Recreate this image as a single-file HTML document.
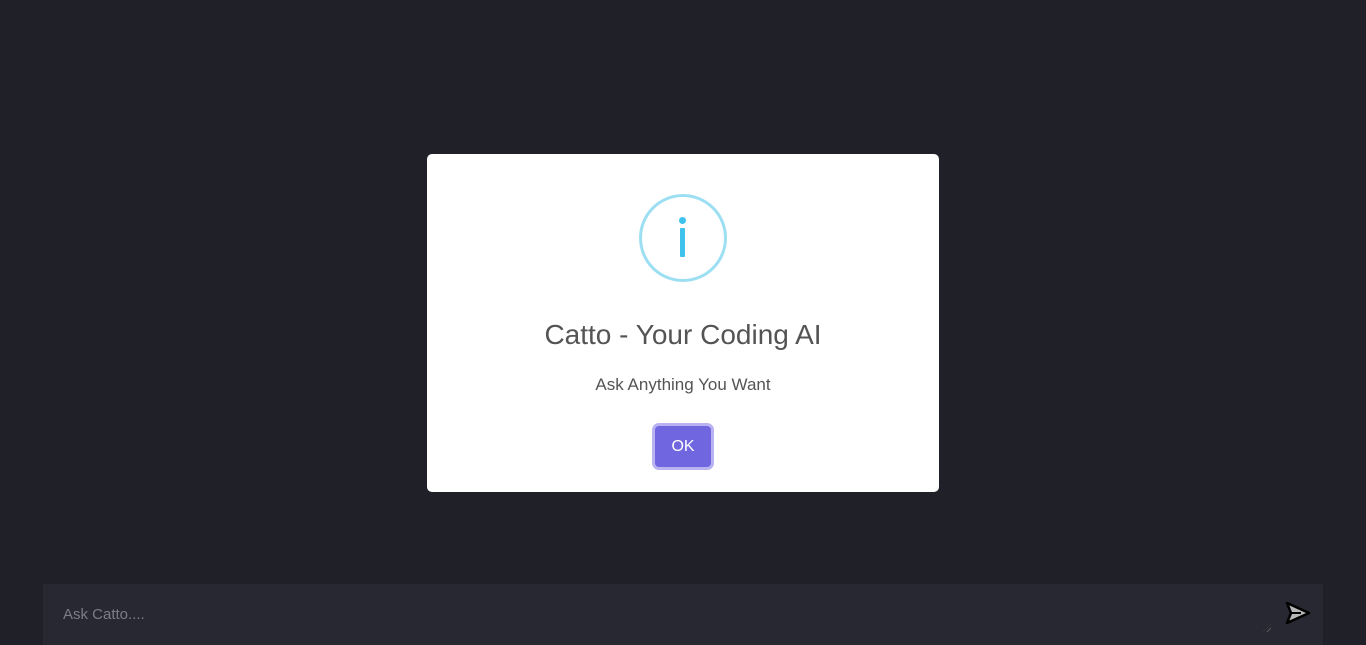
<!DOCTYPE html>
<html><head><meta charset="utf-8"><style>
html,body{margin:0;padding:0;width:1366px;height:645px;overflow:hidden;background:#202029;font-family:"Liberation Sans",sans-serif;}
.bar{position:absolute;left:43px;top:584px;width:1280px;height:61px;background:#282833;}
.ph{position:absolute;left:63px;top:606px;font-size:15px;color:#7d7d88;}
.modal{position:absolute;left:427px;top:154px;width:512px;height:338px;background:#fff;border-radius:5px;text-align:center;}
.icon{position:absolute;left:212px;top:40px;width:82px;height:82px;border:3px solid #9ddff2;border-radius:50%;}
.dot{position:absolute;left:37px;top:20px;width:7px;height:7px;border-radius:50%;background:#3fc3ee;}
.stem{position:absolute;left:38px;top:31px;width:5px;height:29px;background:#3fc3ee;border-radius:1px;}
h2{position:absolute;left:0;right:0;top:165px;margin:0;font-size:28px;font-weight:normal;color:#545454;}
p{position:absolute;left:0;right:0;top:221px;margin:0;font-size:17px;color:#545454;}
.ok{position:absolute;left:228px;top:272px;width:56px;height:41px;background:#7066e0;border-radius:4px;box-shadow:0 0 0 3px #b9b4f1;color:#fff;font-size:16px;line-height:41px;}
.grip{position:absolute;left:1263px;top:624px;width:8px;height:8px;background:repeating-linear-gradient(135deg,transparent 0 2px,#555 2px 3px);clip-path:polygon(100% 0,100% 100%,0 100%);}
</style></head><body>
<div class="bar"></div>
<div class="ph">Ask Catto....</div>
<div class="grip"></div>
<svg style="position:absolute;left:1285px;top:601px" width="26" height="24" viewBox="0 0 26 24"><path d="M2 2 L24 12 L2 22 L6 12 Z" fill="#b8b8b8" stroke="#000" stroke-width="2.5" stroke-linejoin="round"/><path d="M6 12 H16" stroke="#000" stroke-width="2"/></svg>
<div class="modal">
<div class="icon"><div class="dot"></div><div class="stem"></div></div>
<h2>Catto - Your Coding AI</h2>
<p>Ask Anything You Want</p>
<div class="ok">OK</div>
</div>
</body></html>
